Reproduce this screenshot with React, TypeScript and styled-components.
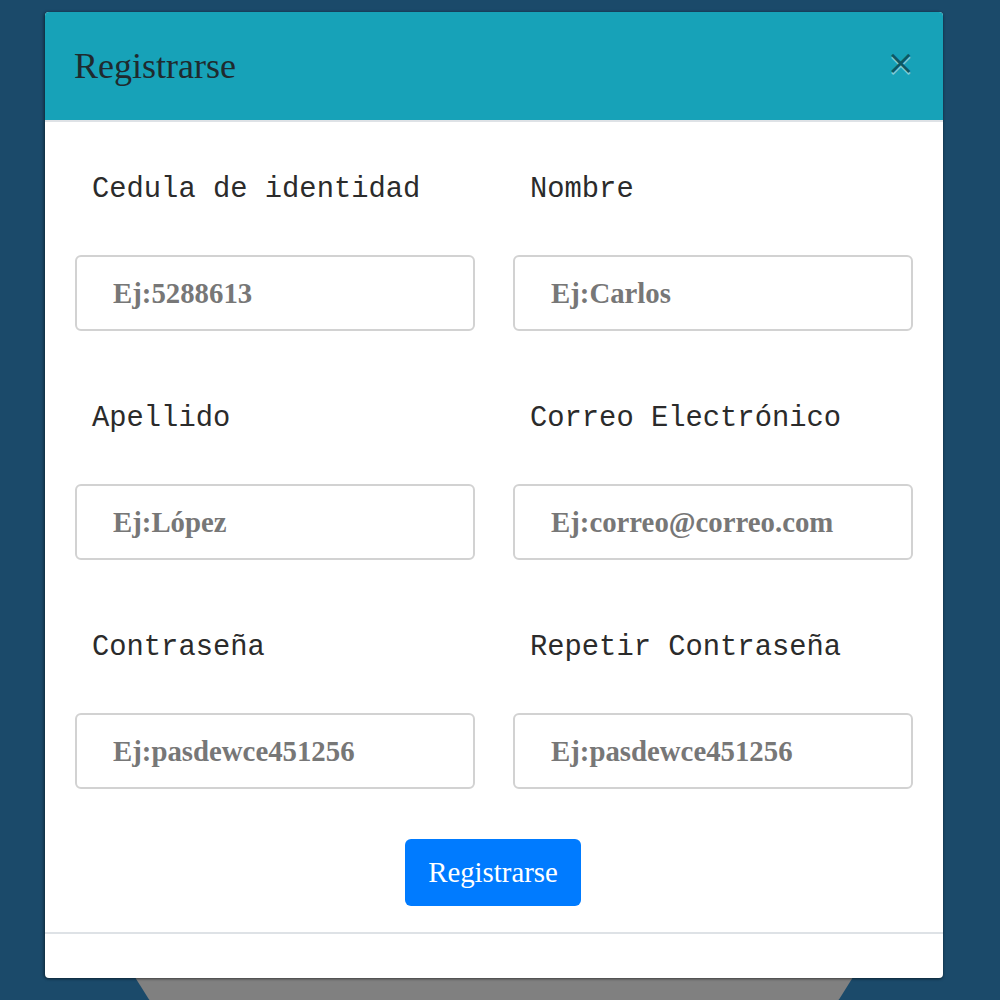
import React from "react";
import styled, { createGlobalStyle } from "styled-components";

const Global = createGlobalStyle`
  html, body { margin: 0; padding: 0; }
  body { background: #1b4a6a; }
  * { box-sizing: border-box; }
`;

const Page = styled.div`
  position: relative;
  width: 1000px;
  height: 1000px;
  overflow: hidden;
  background: #1b4a6a;
`;

const BackCard = styled.div`
  position: absolute;
  left: 77px;
  top: 348px;
  width: 834px;
  height: 834px;
  border-radius: 50%;
  background: #808080;
`;

const Modal = styled.div`
  position: absolute;
  left: 45px;
  top: 12px;
  width: 898px;
  height: 966px;
  background: #fff;
  border-radius: 4px;
  overflow: hidden;
  box-shadow: 0 1px 3px rgba(0, 0, 0, 0.45), -2px 0 3px rgba(0, 0, 0, 0.2);
  display: flex;
  flex-direction: column;
`;

const Header = styled.div`
  height: 110px;
  flex: none;
  background: #17a2b8;
  border-bottom: 2px solid #dee2e6;
  display: flex;
  align-items: center;
  justify-content: space-between;
  padding: 0 29px;
`;

const Title = styled.h5`
  margin: 0;
  font-family: "Liberation Serif", serif;
  font-weight: 400;
  font-size: 36px;
  line-height: 1.2;
  color: #1f2a2e;
  margin-top: 2px;
`;

const Close = styled.button`
  border: 0;
  background: transparent;
  padding: 0;
  font-family: "DejaVu Sans", sans-serif;
  font-size: 34px;
  line-height: 1;
  color: #000;
  opacity: 0.45;
  text-shadow: 0 2px 0 #fff;
  margin-right: -1px;
  margin-top: -8px;
  cursor: pointer;
`;

const Body = styled.form`
  flex: none;
  padding: 46px 30px 0;
  display: flex;
  flex-direction: column;
`;

const Grid = styled.div`
  display: grid;
  grid-template-columns: 400px 400px;
  column-gap: 38px;
  row-gap: 66px;
`;

const Field = styled.div`
  display: flex;
  flex-direction: column;
  gap: 44px;
`;

const Label = styled.label`
  display: block;
  padding-left: 17px;
  font-family: "Liberation Mono", monospace;
  font-size: 28.8px;
  line-height: 43px;
  height: 43px;
  color: #2b2b2b;
  white-space: nowrap;
`;

const Input = styled.input`
  display: block;
  width: 400px;
  height: 76px;
  border: 2px solid #d2d2d2;
  border-radius: 6px;
  padding: 0 36px;
  font-family: "Liberation Serif", serif;
  font-weight: 700;
  font-size: 28.8px;
  color: #495057;
  background: #fff;
  outline: none;
  &::placeholder {
    color: #777;
    opacity: 1;
  }
`;

const Actions = styled.div`
  display: flex;
  justify-content: center;
  padding: 50px 0 26px;
`;

const Button = styled.button`
  width: 176px;
  height: 67px;
  border: 0;
  border-radius: 6px;
  background: #007bff;
  color: #fff;
  font-family: "Liberation Serif", serif;
  font-size: 28.8px;
  line-height: 1;
  margin-left: -2px;
  cursor: pointer;
`;

const Footer = styled.div`
  flex: 1;
  border-top: 2px solid #dee2e6;
`;

const fields = [
  { label: "Cedula de identidad", ph: "Ej:5288613", type: "text" },
  { label: "Nombre", ph: "Ej:Carlos", type: "text" },
  { label: "Apellido", ph: "Ej:López", type: "text" },
  { label: "Correo Electrónico", ph: "Ej:correo@correo.com", type: "email" },
  { label: "Contraseña", ph: "Ej:pasdewce451256", type: "password" },
  { label: "Repetir Contraseña", ph: "Ej:pasdewce451256", type: "password" },
];

export default function App() {
  return (
    <Page>
      <Global />
      <BackCard />
      <Modal>
        <Header>
          <Title>Registrarse</Title>
          <Close type="button" aria-label="Cerrar">×</Close>
        </Header>
        <Body onSubmit={(e) => e.preventDefault()}>
          <Grid>
            {fields.map((f, i) => (
              <Field key={i}>
                <Label htmlFor={`f${i}`}>{f.label}</Label>
                <Input id={`f${i}`} type={f.type} placeholder={f.ph} />
              </Field>
            ))}
          </Grid>
          <Actions>
            <Button type="submit">Registrarse</Button>
          </Actions>
        </Body>
        <Footer />
      </Modal>
    </Page>
  );
}
